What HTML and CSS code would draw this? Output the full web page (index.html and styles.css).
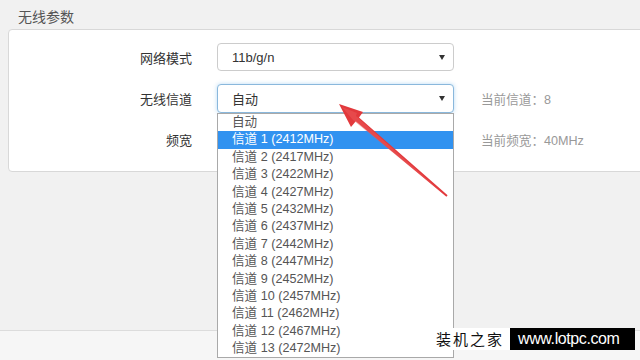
FILE: index.html
```html
<!DOCTYPE html>
<html lang="zh-CN">
<head>
    <meta charset="UTF-8">
    <meta name="viewport" content="width=device-width, initial-scale=1.0">
    <title>无线参数</title>
    <link rel="stylesheet" href="styles.css">
</head>
<body>

<div class="section-title">无线参数</div>

<div class="card">
    <div class="form-row">
        <label class="form-label">网络模式</label>
        <div class="select-box">
            <span class="select-value">11b/g/n</span>
            <span class="caret"></span>
        </div>
        <span class="form-info"></span>
    </div>

    <div class="form-row">
        <label class="form-label">无线信道</label>
        <div class="select-wrap">
            <div class="select-box focused">
                <span class="select-value">自动</span>
                <span class="caret"></span>
            </div>
            <ul class="option-list">
                <li>自动</li>
                <li class="selected">信道 1 (2412MHz)</li>
                <li>信道 2 (2417MHz)</li>
                <li>信道 3 (2422MHz)</li>
                <li>信道 4 (2427MHz)</li>
                <li>信道 5 (2432MHz)</li>
                <li>信道 6 (2437MHz)</li>
                <li>信道 7 (2442MHz)</li>
                <li>信道 8 (2447MHz)</li>
                <li>信道 9 (2452MHz)</li>
                <li>信道 10 (2457MHz)</li>
                <li>信道 11 (2462MHz)</li>
                <li>信道 12 (2467MHz)</li>
                <li>信道 13 (2472MHz)</li>
            </ul>
        </div>
        <span class="form-info">当前信道：8</span>
    </div>

    <div class="form-row">
        <label class="form-label">频宽</label>
        <!-- hidden under the open channel list -->
        <div class="select-box"></div>
        <span class="form-info">当前频宽：40MHz</span>
    </div>
</div>

<div class="footer"></div>

<!-- annotation arrow pointing at the channel select -->
<svg class="mark-arrow" width="640" height="360" viewBox="0 0 640 360">
    <polygon points="339,104 363,112 359,117.5 447.6,195.3 446.4,196.7 355.8,121.3 351,127" fill="#e2393c"/>
    <polygon points="342,107 357,113 356,116 446,196 353,120" fill="#ec5a5a" opacity="0.5"/>
</svg>

<div class="watermark">
    <span class="wm-name">装机之家</span>
    <span class="wm-site">www.lotpc.com</span>
</div>

</body>
</html>
```

FILE: styles.css
```css
body {
    font-family: "Liberation Sans", Arial, "Noto Sans CJK SC", sans-serif;
    margin: 0;
    padding: 0;
    background: #f1f1f1;
    color: #333;
    width: 640px;
    height: 360px;
    overflow: hidden;
    position: relative;
}
.section-title {
    font-size: 14px;
    color: #555;
    padding: 8px 0 0 18px;
    height: 21px;
    line-height: 18px;
}
.card {
    background: #fff;
    border: 1px solid #d8d8d8;
    border-radius: 4px;
    margin: 0 -30px 0 8px;
    padding: 13px 0 18px 0;
    display: flex;
    flex-direction: column;
    gap: 13px;
}
.form-row {
    display: grid;
    grid-template-columns: 183px 237px auto;
    column-gap: 25px;
    align-items: center;
    height: 28px;
}
.form-label {
    text-align: right;
    font-size: 13px;
    color: #333;
}
.form-info {
    font-size: 12.6px;
    color: #999;
    padding-left: 2px;
}
.select-wrap {
    position: relative;
}
.select-box {
    height: 28px;
    box-sizing: border-box;
    border: 1px solid #ccc;
    border-radius: 4px;
    padding: 0 8px 0 14px;
    display: flex;
    align-items: center;
    justify-content: space-between;
    font-size: 13px;
    color: #333;
    background: #fff;
}
.select-box.focused {
    height: 29px;
    border-color: #8ab8dc;
    box-shadow: 0 0 4px rgba(102, 175, 233, 0.45);
}
.caret {
    width: 0;
    height: 0;
    border-left: 3px solid transparent;
    border-right: 3px solid transparent;
    border-top: 5px solid #333;
}
.option-list {
    position: absolute;
    top: 29px;
    left: 0;
    width: 237px;
    box-sizing: border-box;
    margin: 0;
    padding: 0;
    list-style: none;
    background: #fff;
    border: 1px solid #a9a9a9;
    z-index: 5;
}
.option-list li {
    height: 17.4px;
    line-height: 17.4px;
    padding-left: 14px;
    font-size: 12.6px;
    color: #555;
    white-space: nowrap;
}
.option-list li.selected {
    background: #3192f0;
    color: #fff;
}
.footer {
    margin-top: 158px;
    border-top: 1px solid #dcdcdc;
    background: #f6f6f6;
    height: 40px;
}
.mark-arrow {
    position: absolute;
    left: 0;
    top: 0;
    z-index: 10;
    pointer-events: none;
}
.watermark {
    position: absolute;
    left: 432px;
    top: 328px;
    display: flex;
    height: 22px;
    z-index: 20;
}
.wm-name {
    background: #fff;
    color: #111;
    width: 78px;
    padding-left: 4px;
    box-sizing: border-box;
    font-family: "Noto Sans CJK SC", sans-serif;
    font-size: 15px;
    letter-spacing: 2px;
    line-height: 22px;
}
.wm-site {
    background: #000;
    color: #fff;
    width: 125px;
    padding-left: 8px;
    box-sizing: border-box;
    font-size: 16px;
    letter-spacing: -0.4px;
    line-height: 22px;
}
```
